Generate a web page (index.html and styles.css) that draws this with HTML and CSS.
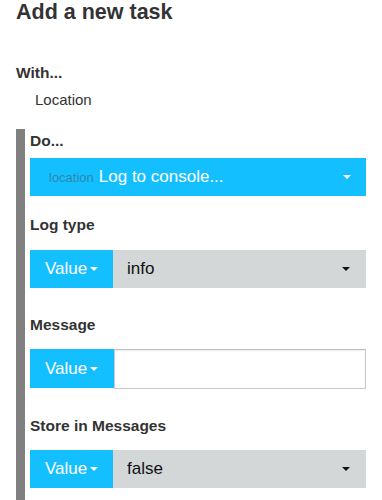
FILE: index.html
```html
<!DOCTYPE html>
<html>
<head>
<meta charset="utf-8">
<link rel="stylesheet" href="styles.css">
</head>
<body>
<h2 class="title">Add a new task</h2>
<div class="label with">With...</div>
<div class="subject">Location</div>
<div class="task">
  <div class="label do">Do...</div>
  <div class="action">
    <span class="action-kind">location</span>
    <span class="action-name">Log to console...</span>
    <span class="caret caret-white caret-right"></span>
  </div>

  <div class="label field-label">Log type</div>
  <div class="field">
    <div class="mode">Value<span class="caret caret-white"></span></div>
    <div class="choice">info<span class="caret caret-dark caret-right"></span></div>
  </div>

  <div class="label field-label">Message</div>
  <div class="field field-input">
    <div class="mode">Value<span class="caret caret-white"></span></div>
    <input class="text" type="text">
  </div>

  <div class="label field-label">Store in Messages</div>
  <div class="field">
    <div class="mode">Value<span class="caret caret-white"></span></div>
    <div class="choice">false<span class="caret caret-dark caret-right"></span></div>
  </div>
</div>
</body>
</html>
```

FILE: styles.css
```css
html, body {
  margin: 0;
  padding: 0;
  background: #fff;
}
body {
  padding: 0 16px;
  font-family: "Liberation Sans", Arial, sans-serif;
  color: #333;
}
.title {
  margin: 0;
  font-size: 21.5px;
  line-height: 24px;
  font-weight: bold;
  color: #333;
}
.label {
  font-size: 15.5px;
  line-height: 20px;
  font-weight: bold;
  color: #333;
}
.with {
  margin-top: 39px;
}
.subject {
  margin-top: 7px;
  padding-left: 19px;
  font-size: 15px;
  line-height: 20px;
  color: #333;
}
.task {
  margin-top: 19px;
  border-left: 9px solid #808080;
  padding: 2px 0 12px 5px;
}
.action {
  margin-top: 7px;
  height: 38px;
  background: #14bfff;
  display: flex;
  align-items: center;
  padding: 0 15px 0 19px;
}
.action-kind {
  font-size: 13px;
  color: #2f88ab;
  margin-right: 5px;
}
.action-name {
  font-size: 17px;
  color: #fff;
}
.caret {
  display: inline-block;
  width: 0;
  height: 0;
  border-left: 4px solid transparent;
  border-right: 4px solid transparent;
  border-top: 4px solid #fff;
}
.caret-white {
  border-top-color: #fff;
}
.caret-dark {
  border-top-color: #111;
}
.caret-right {
  margin-left: auto;
}
.field-label {
  margin-top: 19px;
}
.field + .field-label {
  margin-top: 27px;
}
.field {
  height: 38px;
  display: flex;
  margin-top: 14px;
}
.action + .field-label + .field {
  margin-top: 15px;
}
.field-input {
  height: 40px;
}
.mode {
  width: 83px;
  box-sizing: border-box;
  background: #14bfff;
  color: #fff;
  font-size: 17px;
  display: flex;
  align-items: center;
  padding-left: 15px;
}
.mode .caret {
  margin-left: 3px;
}
.field-input .mode {
  width: 84px;
  height: 39px;
}
.choice {
  flex: 1;
  background: #d4d7d8;
  color: #111;
  font-size: 17px;
  display: flex;
  align-items: center;
  padding: 0 16px 0 14px;
}
.text {
  flex: 1;
  margin: 0;
  box-sizing: border-box;
  height: 40px;
  border: 1px solid #c8c8c8;
  border-top-color: #bdbdbd;
  box-shadow: inset 0 1px 2px rgba(0,0,0,0.08);
  background: #fff;
  outline: none;
  font-family: inherit;
  font-size: 17px;
}
```
